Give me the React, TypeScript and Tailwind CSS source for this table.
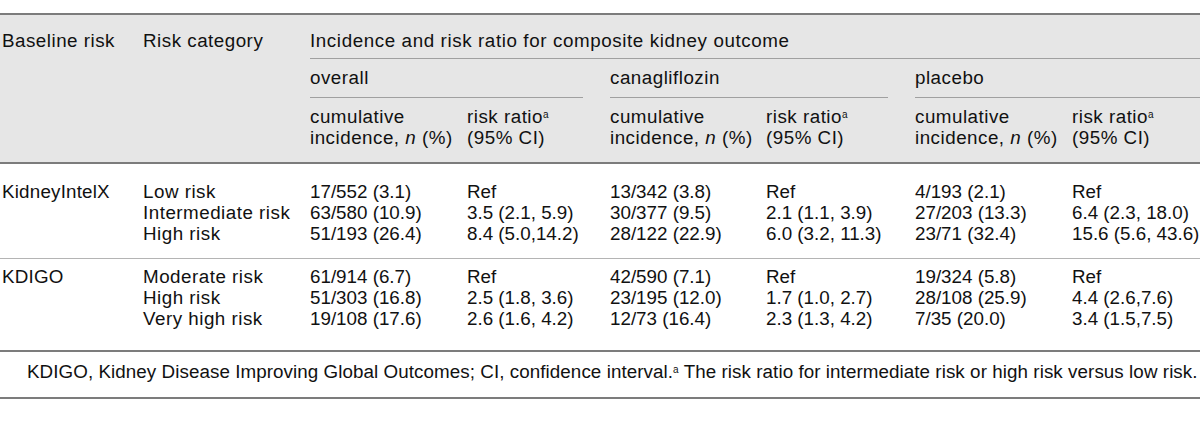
const rows = [
  {
    group: "KidneyIntelX",
    items: [
      ["Low risk", "17/552 (3.1)", "Ref", "13/342 (3.8)", "Ref", "4/193 (2.1)", "Ref"],
      ["Intermediate risk", "63/580 (10.9)", "3.5 (2.1, 5.9)", "30/377 (9.5)", "2.1 (1.1, 3.9)", "27/203 (13.3)", "6.4 (2.3, 18.0)"],
      ["High risk", "51/193 (26.4)", "8.4 (5.0,14.2)", "28/122 (22.9)", "6.0 (3.2, 11.3)", "23/71 (32.4)", "15.6 (5.6, 43.6)"],
    ],
  },
  {
    group: "KDIGO",
    items: [
      ["Moderate risk", "61/914 (6.7)", "Ref", "42/590 (7.1)", "Ref", "19/324 (5.8)", "Ref"],
      ["High risk", "51/303 (16.8)", "2.5 (1.8, 3.6)", "23/195 (12.0)", "1.7 (1.0, 2.7)", "28/108 (25.9)", "4.4 (2.6,7.6)"],
      ["Very high risk", "19/108 (17.6)", "2.6 (1.6, 4.2)", "12/73 (16.4)", "2.3 (1.3, 4.2)", "7/35 (20.0)", "3.4 (1.5,7.5)"],
    ],
  },
];

const widths = ["w-[143px]", "w-[167px]", "w-[157px]", "w-[143px]", "w-[156px]", "w-[149px]", "w-[157px]", "w-[128px]"];

function SubHead() {
  return (
    <>
      <th className="pt-[8px] pb-[14px] text-left align-top font-normal">
        cumulative
        <br />
        incidence, <i>n</i> (%)
      </th>
      <th className="pt-[8px] pb-[14px] text-left align-top font-normal">
        risk ratio<sup className="text-[10px]">a</sup>
        <br />
        (95% CI)
      </th>
    </>
  );
}

export default function App() {
  return (
    <div className="h-[423px] w-[1200px] overflow-hidden bg-white pt-[13px] font-['Liberation_Sans',Arial,sans-serif] text-[18.8px] leading-[21px] tracking-[0.5px] text-[#111]">
      <table className="w-[1200px] table-fixed border-collapse">
        <colgroup>
          {widths.map((w, i) => (
            <col key={i} className={w} />
          ))}
        </colgroup>
        <thead className="bg-[#e6e6e6]">
          <tr className="border-t-2 border-[#7c7c7c]">
            <th rowSpan={3} className="pt-[15px] pl-[2px] text-left align-top font-normal">
              Baseline risk
            </th>
            <th rowSpan={3} className="pt-[15px] text-left align-top font-normal">
              Risk category
            </th>
            <th colSpan={6} className="p-0 text-left font-normal">
              <div className="h-[44px] border-b border-[#a0a0a0] pt-[15px] tracking-[0.6px]">
                Incidence and risk ratio for composite kidney outcome
              </div>
            </th>
          </tr>
          <tr>
            <th colSpan={2} className="p-0 text-left font-normal">
              <div className="mr-[27px] h-[39px] border-b border-[#a0a0a0] pt-[8px]">overall</div>
            </th>
            <th colSpan={2} className="p-0 text-left font-normal">
              <div className="mr-[27px] h-[39px] border-b border-[#a0a0a0] pt-[8px]">canagliflozin</div>
            </th>
            <th colSpan={2} className="p-0 text-left font-normal">
              <div className="h-[39px] border-b border-[#a0a0a0] pt-[8px]">placebo</div>
            </th>
          </tr>
          <tr className="border-b-2 border-[#7c7c7c]">
            <SubHead />
            <SubHead />
            <SubHead />
          </tr>
        </thead>
        {rows.map((g, gi) => (
          <tbody key={g.group} className={gi === 0 ? "border-b border-[#b4b4b4]" : "border-b-2 border-[#7c7c7c]"}>
            {g.items.map((r, ri) => {
              const pad = `${ri === 0 ? (gi === 0 ? "pt-[17px]" : "pt-[7px]") : ""} ${
                ri === 2 ? (gi === 0 ? "pb-[14px]" : "pb-[21px]") : ""
              }`;
              return (
                <tr key={ri}>
                  <td className={`pl-[2px] align-top tracking-[0.2px] ${pad}`}>{ri === 0 ? g.group : ""}</td>
                  {r.map((c, ci) => (
                    <td
                      key={ci}
                      className={`whitespace-nowrap align-top ${ci === 0 ? "tracking-[0.5px]" : "tracking-[0px]"} ${pad}`}
                    >
                      {c}
                    </td>
                  ))}
                </tr>
              );
            })}
          </tbody>
        ))}
      </table>
      <div className="h-[47px] whitespace-nowrap border-b-2 border-[#7c7c7c] pl-[27px] pt-[9px] tracking-[0.07px]">
        KDIGO, Kidney Disease Improving Global Outcomes; CI, confidence interval.<sup className="text-[10px]">a</sup> The risk ratio for intermediate risk or high risk versus low risk.
      </div>
    </div>
  );
}
